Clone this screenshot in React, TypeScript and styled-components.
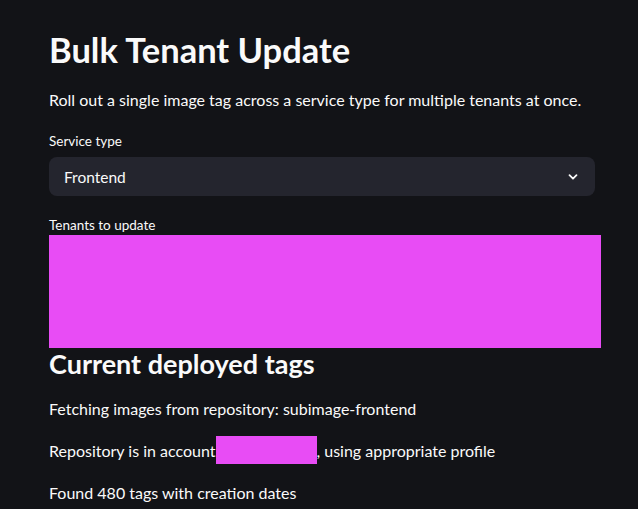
import React from 'react'
import styled, { createGlobalStyle } from 'styled-components'

const GlobalStyle = createGlobalStyle`
  html, body {
    margin: 0;
    padding: 0;
    background: #121317;
  }
  body {
    font-family: Lato, "Noto Sans", sans-serif;
    color: #fafafa;
    -webkit-font-smoothing: antialiased;
  }
`

const Page = styled.div`
  width: 638px;
  height: 509px;
  overflow: hidden;
  padding: 28px 37px 0 49px;
  box-sizing: border-box;
  display: flex;
  flex-direction: column;
`

const Title = styled.h1`
  margin: 0;
  font-size: 34.5px;
  font-weight: 700;
  line-height: 44px;
`

const Text = styled.p`
  margin: 0;
  font-size: 16px;
  line-height: 22px;
`

const Lead = styled(Text)`
  margin-top: 17px;
`

const Field = styled.div<{ $top: number }>`
  display: flex;
  flex-direction: column;
  margin-top: ${(p) => p.$top}px;
`

const Label = styled.label<{ $gap: number }>`
  font-size: 13.5px;
  line-height: 18px;
  margin-bottom: ${(p) => p.$gap}px;
`

const Select = styled.div`
  height: 39px;
  width: 546px;
  border-radius: 8px;
  background: #24252e;
  display: flex;
  align-items: center;
  justify-content: space-between;
  padding: 0 16px 0 15px;
  box-sizing: border-box;
  font-size: 15.5px;
`

const TenantBox = styled.div`
  width: 552px;
  height: 113px;
  background: #e84cf5;
`

const Heading = styled.h2`
  margin: 0;
  font-size: 27px;
  font-weight: 700;
  line-height: 32px;
`

const InlineRedact = styled.span`
  display: inline-block;
  width: 101px;
  height: 28px;
  margin: -4px 0 -2px;
  vertical-align: top;
  background: #e84cf5;
`

const Lines = styled.div`
  display: flex;
  flex-direction: column;
  gap: 20px;
  margin-top: 18px;
`

const Chevron = () => (
  <svg width="12" height="12" viewBox="0 0 12 12" fill="none">
    <path d="M2.5 4.2 6 7.7 9.5 4.2" stroke="#fafafa" strokeWidth="1.8" strokeLinecap="round" strokeLinejoin="round" />
  </svg>
)

export default function App() {
  return (
    <>
      <GlobalStyle />
      <Page>
        <Title>Bulk Tenant Update</Title>
        <Lead>Roll out a single image tag across a service type for multiple tenants at once.</Lead>
        <Field $top={21}>
          <Label $gap={7}>Service type</Label>
          <Select>
            <span>Frontend</span>
            <Chevron />
          </Select>
        </Field>
        <Field $top={20}>
          <Label $gap={1}>Tenants to update</Label>
          <TenantBox />
        </Field>
        <Heading>Current deployed tags</Heading>
        <Lines>
          <Text>Fetching images from repository: subimage-frontend</Text>
          <Text>Repository is in account<InlineRedact />, using appropriate profile</Text>
          <Text>Found 480 tags with creation dates</Text>
        </Lines>
      </Page>
    </>
  )
}
